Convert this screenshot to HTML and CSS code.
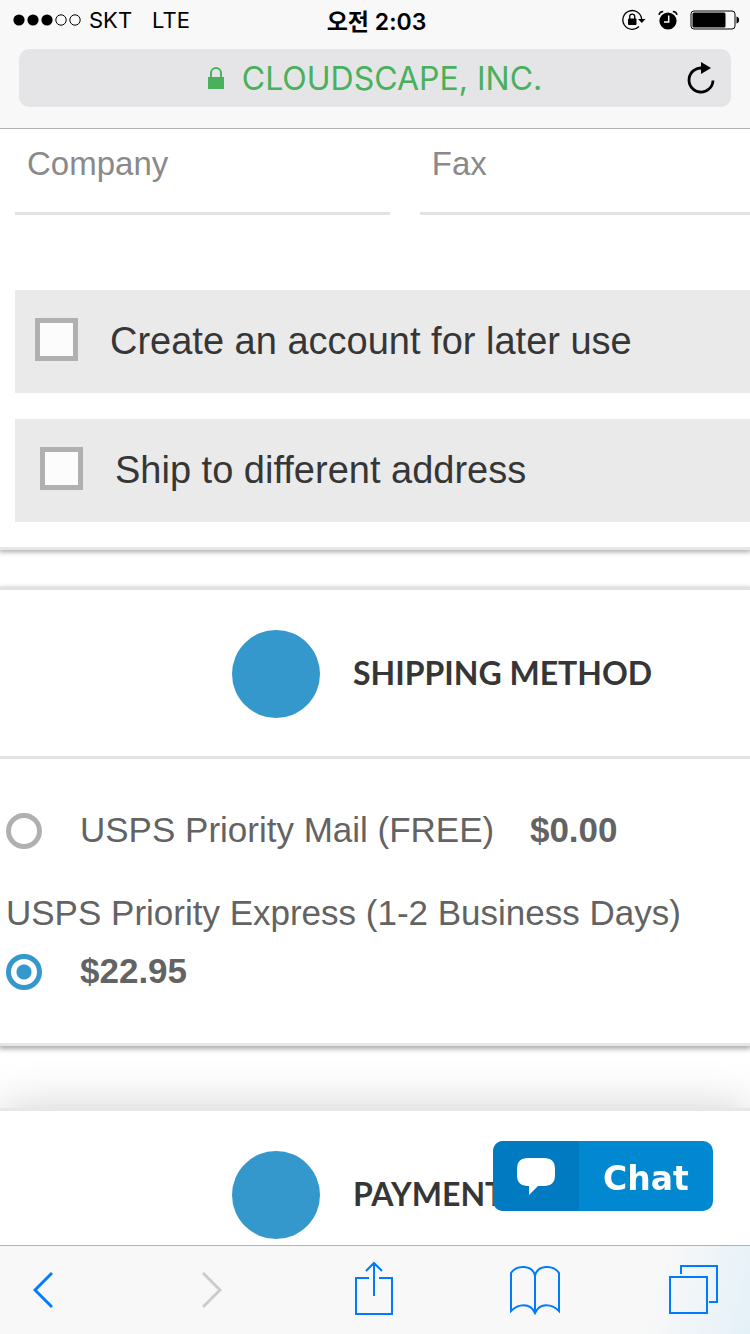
FILE: index.html
```
<!DOCTYPE html>
<html lang="en">
<head>
  <meta charset="UTF-8">
  <meta name="viewport" content="width=device-width, initial-scale=1">
  <title>Checkout</title>
  <link rel="stylesheet" href="styles.css">
</head>
<body>
  <header class="browser-top">
    <div class="status-bar">
      <div class="status-left">
        <svg class="signal" width="68" height="12" viewBox="0 0 68 12">
          <circle cx="6" cy="6" r="5.6"/>
          <circle cx="20" cy="6" r="5.6"/>
          <circle cx="34" cy="6" r="5.6"/>
          <circle cx="48" cy="6" r="5.2" fill="none" stroke="#000"/>
          <circle cx="62" cy="6" r="5.2" fill="none" stroke="#000"/>
        </svg>
        <span>SKT</span>
        <span class="network">LTE</span>
      </div>
      <span class="time">오전 2:03</span>
      <div class="status-right">
        <svg width="24" height="22" viewBox="0 0 24 22">
          <path d="M17 17.500A9.400 9.400 0 1 1 19.600 10" fill="none" stroke="#000" stroke-width="1.3"/>
          <path d="M16 10h7.500L19.800 14z"/>
          <rect x="6" y="9.500" width="8.500" height="6.500" rx="1"/>
          <path d="M7.700 10V7.600a2.500 2.500 0 0 1 5 0V10" fill="none" stroke="#000" stroke-width="1.3"/>
        </svg>
        <svg width="20" height="20" viewBox="0 0 20 20">
          <circle cx="10" cy="11" r="8.6"/>
          <path d="M1 4.800C1.400 2.800 3 1.600 5.200 1.500M19 4.800C18.600 2.800 17 1.600 14.800 1.500" fill="none" stroke="#000" stroke-width="1.5"/>
          <path d="M10.700 5.500V12H6" fill="none" stroke="#fff" stroke-width="1.5"/>
        </svg>
        <svg width="50" height="20" viewBox="0 0 50 20">
          <rect x="1" y="1" width="44" height="18" rx="3" fill="none" stroke="#000"/>
          <rect x="2.500" y="2.500" width="33" height="15" rx="1.5"/>
          <path d="M46.500 6.500c3.500.5 3.500 6.500 0 7z"/>
        </svg>
      </div>
    </div>
    <div class="address-bar">
      <a class="site" href="#">
        <svg width="16" height="22" viewBox="0 0 16 22">
          <rect y="10" width="16" height="12"/>
          <path d="M3 11V6a5 5 0 0 1 10 0v5" fill="none" stroke="#49b05c" stroke-width="2"/>
        </svg>
        <span>CLOUDSCAPE, INC.</span>
      </a>
      <button class="reload" type="button" aria-label="Reload">
        <svg width="28" height="32" viewBox="0 0 28 32">
          <path d="M16 6.200A12 12 0 1 0 26 18.500" fill="none" stroke="#000" stroke-width="2.8"/>
          <path d="M14 0v12l10-6z"/>
        </svg>
      </button>
    </div>
  </header>

  <main class="page">
    <form>
      <!-- Billing -->
      <section class="card billing">
        <div class="fields">
          <input type="text" placeholder="Company" aria-label="Company">
          <input type="text" placeholder="Fax" aria-label="Fax">
        </div>
        <label class="option">
          <input type="checkbox" name="create_account">
          <span>Create an account for later use</span>
        </label>
        <label class="option option-ship">
          <input type="checkbox" name="ship_different">
          <span>Ship to different address</span>
        </label>
      </section>

      <!-- Shipping -->
      <section class="card shipping">
        <div class="card-head">
          <span class="step"></span>
          <h2>SHIPPING METHOD</h2>
        </div>
        <div class="methods">
          <div class="method">
            <input type="radio" name="shipping" id="priority">
            <label for="priority">USPS Priority Mail (FREE) <strong class="price">$0.00</strong></label>
          </div>
          <label class="method-name" for="express">USPS Priority Express (1-2 Business Days)</label>
          <div class="method">
            <input type="radio" name="shipping" id="express" checked>
            <label for="express"><strong>$22.95</strong></label>
          </div>
        </div>
      </section>

      <!-- Payment -->
      <section class="card payment">
        <div class="card-head">
          <span class="step"></span>
          <h2>PAYMENT</h2>
        </div>
      </section>
    </form>
  </main>

  <button class="chat" type="button">
    <span class="chat-icon">
      <svg width="38" height="37" viewBox="0 0 38 37">
        <path d="M11 0h16q11 0 11 11v6q0 11-11 11h-6l-9 9v-9h-1Q0 28 0 17v-6Q0 0 11 0z" fill="#fff"/>
      </svg>
    </span>
    <span class="chat-text">Chat</span>
  </button>

  <nav class="toolbar">
    <button type="button" aria-label="Back">
      <svg width="20" height="38" viewBox="0 0 20 38"><path d="M19 2L2 19l17 17" stroke-width="3"/></svg>
    </button>
    <button type="button" aria-label="Forward" disabled>
      <svg width="20" height="38" viewBox="0 0 20 38"><path d="M1 2l17 17L1 36" stroke-width="3"/></svg>
    </button>
    <button type="button" aria-label="Share">
      <svg width="38" height="58" viewBox="0 0 38 58"><path d="M14 17H1v36h36V17H24M19 35V3M11 10l8-8 8 8"/></svg>
    </button>
    <button type="button" aria-label="Bookmarks">
      <svg width="50" height="50" viewBox="0 0 50 50"><path d="M25 48V11C23 0 7-1 1 8v38c7-7 19-9 24 2 5-11 17-9 24-2V8C43-1 27 0 25 11"/></svg>
    </button>
    <button type="button" aria-label="Tabs">
      <svg width="50" height="50" viewBox="0 0 50 50"><path d="M1 12h37v36H1zM12 9V1h36v36h-8"/></svg>
    </button>
  </nav>
</body>
</html>
```

FILE: styles.css
```
* { box-sizing: border-box; }
body {
  margin: 0;
  height: 100vh;
  display: flex;
  flex-direction: column;
  overflow: hidden;
  background: #fff;
  font-family: "Liberation Sans", Arial, sans-serif;
}
button { border: 0; padding: 0; background: none; cursor: pointer; }
svg { display: block; }

/* browser header */
.browser-top {
  background: #f8f8f8;
  border-bottom: 1px solid #b2b2b2;
  padding-bottom: 21px;
  font-family: Inter, "Noto Sans CJK KR", sans-serif;
}
.status-bar {
  display: grid;
  grid-template-columns: 1fr auto 1fr;
  align-items: center;
  height: 40px;
  padding: 0 10px 0 13px;
  font-size: 23px;
}
.status-left { display: flex; align-items: center; gap: 8px; font-size: 22px; }
.network { margin-left: 12px; }
.time { font-weight: 600; }
.status-right { display: flex; align-items: center; justify-content: flex-end; gap: 12px; }
.address-bar {
  display: grid;
  grid-template-columns: 1fr auto 1fr;
  align-items: center;
  height: 58px;
  margin: 9px 19px 0;
  padding: 0 16px;
  border-radius: 10px;
  background: #e5e5e7;
}
.site {
  grid-column: 2;
  display: flex;
  align-items: center;
  gap: 18px;
  color: #49b05c;
  font-size: 32px;
  text-decoration: none;
}
.site svg { fill: #49b05c; }
.reload { justify-self: end; }

/* page */
.page { flex: 1; min-height: 0; overflow: hidden; }
.card { background: #fff; }
.billing {
  padding: 0 0 25px 15px;
  border-bottom: 3px solid #e6e6e6;
  box-shadow: 0 1px 5px 1px #aaa;
}
.fields { display: grid; grid-template-columns: 51% 51%; gap: 30px; }
.fields input {
  height: 86px;
  padding: 0 12px 14px;
  border: 0;
  border-bottom: 3px solid #e2e2e2;
  border-radius: 0;
  background: none;
  font: 33px "Liberation Sans", Arial, sans-serif;
}
.fields input::placeholder { color: #8a8a8a; opacity: 1; }
.option {
  display: flex;
  align-items: center;
  gap: 32px;
  height: 103px;
  margin-top: 26px;
  padding-left: 20px;
  background: #eaeaea;
  color: #363636;
  font-size: 38px;
}
.fields + .option { margin-top: 75px; }
.option-ship { padding-left: 25px; }
.option input {
  appearance: none;
  width: 43px;
  height: 43px;
  margin: 0 0 4px;
  border: 5px solid #b0b0b0;
  background: #fcfcfc;
}
.shipping {
  margin-top: 37px;
  border-top: 3px solid #e2e2e2;
  border-bottom: 3px solid #e6e6e6;
  box-shadow: 0 2px 5px 1px #aaa;
}
.card-head {
  display: flex;
  align-items: center;
  gap: 33px;
  height: 169px;
  padding: 2px 0 0 232px;
  border-bottom: 3px solid #e2e2e2;
}
.step { width: 88px; height: 88px; border-radius: 50%; background: #3498cd; }
.card-head h2 {
  margin: 0;
  padding-bottom: 4px;
  color: #363636;
  font: bold 32px Lato, sans-serif;
}
.methods { padding: 42px 6px 43px; color: #636363; font-size: 35px; line-height: 58px; }
.method { display: flex; align-items: center; gap: 38px; }
.method .price { margin-left: 26px; }
.method-name { display: block; margin-top: 25px; }
.method input {
  appearance: none;
  width: 36px;
  height: 36px;
  margin: 2px 0 0;
  border: 5px solid #b0b0b0;
  border-radius: 50%;
}
.method input:checked {
  border-color: #3498cd;
  background: radial-gradient(circle, #3498cd 7px, #fff 8px);
}
.payment {
  margin-top: 62px;
  border-top: 3px solid #e8e8e8;
  box-shadow: 0 0 45px #d0d0d0;
}

/* chat button */
.chat {
  position: fixed;
  right: 37px;
  bottom: 123px;
  display: flex;
  width: 220px;
  height: 70px;
  border-radius: 10px;
  overflow: hidden;
  background: #0288d1;
  color: #fff;
  font: bold 33px "DejaVu Sans", sans-serif;
}
.chat-icon {
  display: flex;
  align-items: center;
  justify-content: center;
  width: 86px;
  height: 70px;
  background: #007ac1;
}
.chat-text { flex: 1; line-height: 76px; }

/* browser toolbar */
.toolbar {
  display: grid;
  grid-template-columns: 169fr 153fr 155fr 159fr 81fr;
  align-items: center;
  justify-items: start;
  height: 89px;
  padding-left: 33px;
  border-top: 1px solid #b2b2b2;
  background: linear-gradient(105deg, #f8f8f8 86%, #e4f1f8);
}
.toolbar svg { fill: none; stroke: #007aff; stroke-width: 2; }
.toolbar button:disabled svg { stroke: #ccc; }
```
